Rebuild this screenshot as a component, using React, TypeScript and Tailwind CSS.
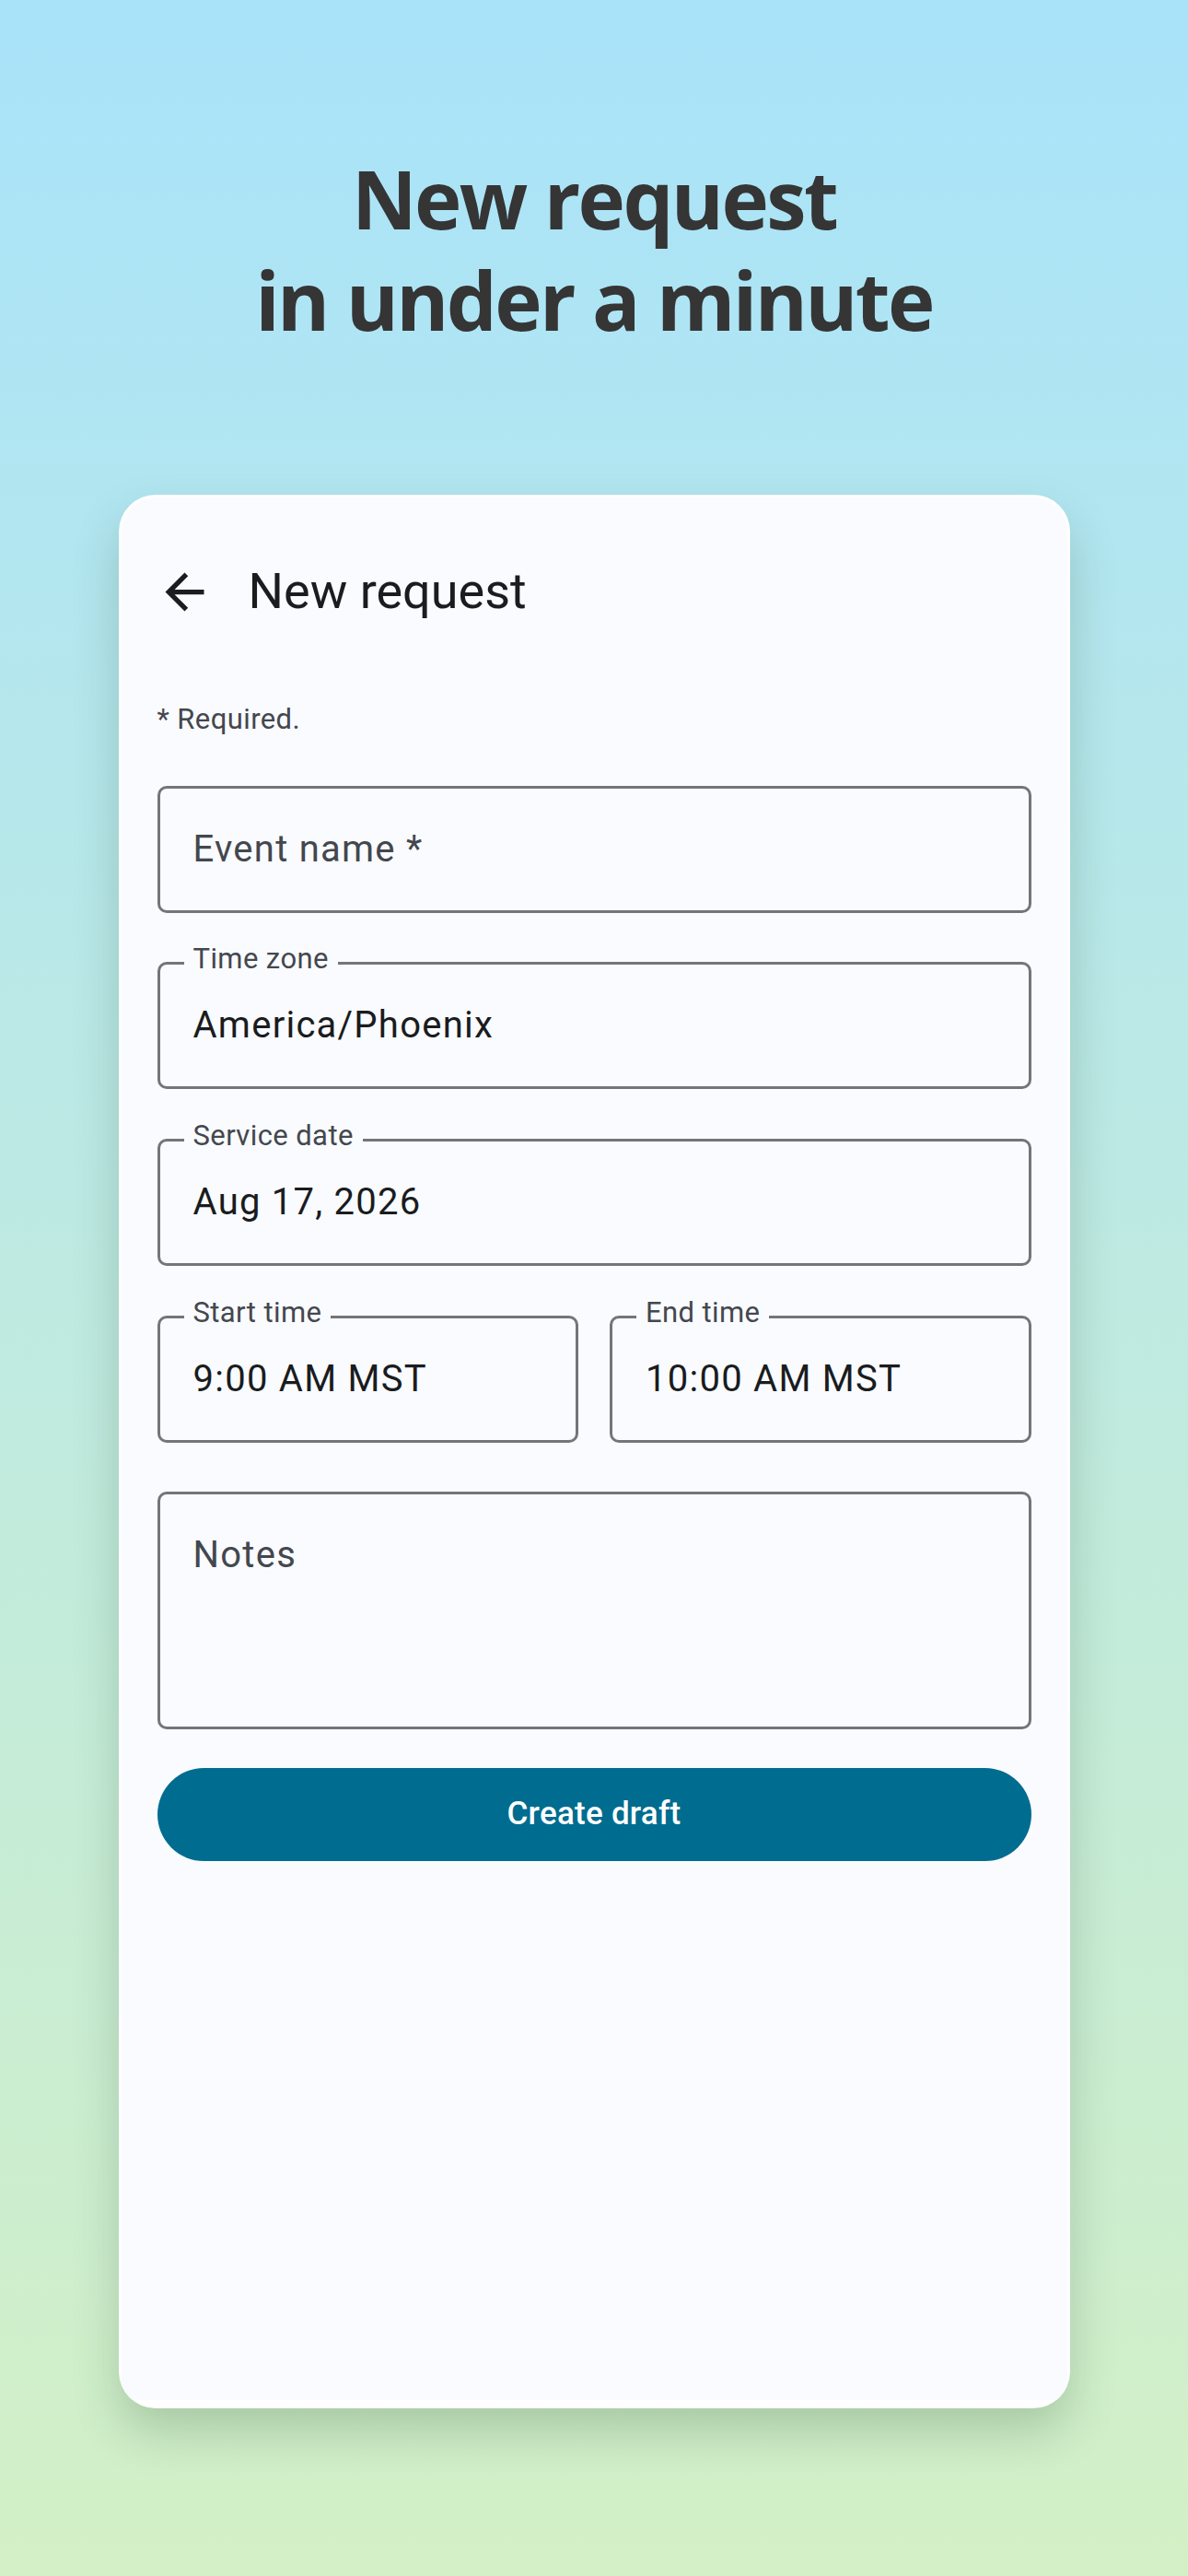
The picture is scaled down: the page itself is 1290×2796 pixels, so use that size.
import React from "react";

const roboto = { fontFamily: "Roboto, 'Liberation Sans', sans-serif" };

function Field({
  label,
  value,
  placeholder,
  className = "",
}: {
  label?: string;
  value?: string;
  placeholder?: string;
  className?: string;
}) {
  return (
    <div
      className={`relative h-[138px] rounded-[10px] border-[3px] border-[#737579] flex items-center pl-[36px] ${className}`}
    >
      {label && (
        <span className="absolute left-[26px] top-[-24px] bg-[#f9fbfe] px-[10px] text-[31px] leading-[36px] text-[#44474e] tracking-[0.4px]">
          {label}
        </span>
      )}
      {value ? (
        <span className="text-[40px] leading-[56px] text-[#1a1c1e] tracking-[1.25px]">{value}</span>
      ) : (
        <span className="text-[40px] leading-[56px] text-[#44474e] tracking-[1.25px]">{placeholder}</span>
      )}
    </div>
  );
}

export default function App() {
  return (
    <div
      className="w-full min-h-[2796px] bg-gradient-to-b from-[#a9e3fa] to-[#d3f0c6] flex flex-col items-center"
      style={roboto}
    >
      <h1
        className="pt-[160px] text-center text-[87px] leading-[110px] font-bold tracking-[-2.6px] text-[#353535]"
        style={{ fontFamily: "'Open Sans', 'Noto Sans', sans-serif" }}
      >
        New request
        <br />
        in under a minute
      </h1>

      <div className="mt-[157px] w-[1033px] h-[2077px] overflow-hidden rounded-[40px] bg-white p-[3px] pb-[9px] shadow-[0_26px_50px_rgba(30,70,40,0.22)] flex flex-col">
        <div className="flex-1 rounded-t-[37px] bg-[#f9fbfe] px-[39px] pt-[70px] flex flex-col">
          <div className="flex items-center h-[64px]">
            <svg viewBox="0 0 24 24" className="w-[63px] h-[63px] -ml-[2px]" fill="#1a1c1e">
              <path d="M20 11H7.83l5.59-5.59L12 4l-8 8 8 8 1.41-1.41L7.83 13H20v-2z" />
            </svg>
            <span className="ml-[38px] text-[54px] leading-[64px] text-[#1a1c1e]">New request</span>
          </div>

          <div className="mt-[87px] text-[31px] leading-[40px] text-[#44474e] tracking-[0.4px]">* Required.</div>

          <Field className="mt-[52px]" placeholder="Event name *" />
          <Field className="mt-[53px]" label="Time zone" value="America/Phoenix" />
          <Field className="mt-[54px]" label="Service date" value="Aug 17, 2026" />

          <div className="mt-[54px] grid grid-cols-2 gap-[34px]">
            <Field label="Start time" value="9:00 AM MST" />
            <Field label="End time" value="10:00 AM MST" />
          </div>

          <div className="mt-[53px] h-[258px] rounded-[10px] border-[3px] border-[#737579] pl-[36px] pt-[38px]">
            <span className="text-[40px] leading-[56px] text-[#44474e] tracking-[1.25px]">Notes</span>
          </div>

          <button className="mt-[42px] h-[101px] rounded-full bg-[#006c8f] text-white text-[35px] font-medium tracking-[0.25px] flex items-center justify-center">
            Create draft
          </button>
        </div>
      </div>
    </div>
  );
}
